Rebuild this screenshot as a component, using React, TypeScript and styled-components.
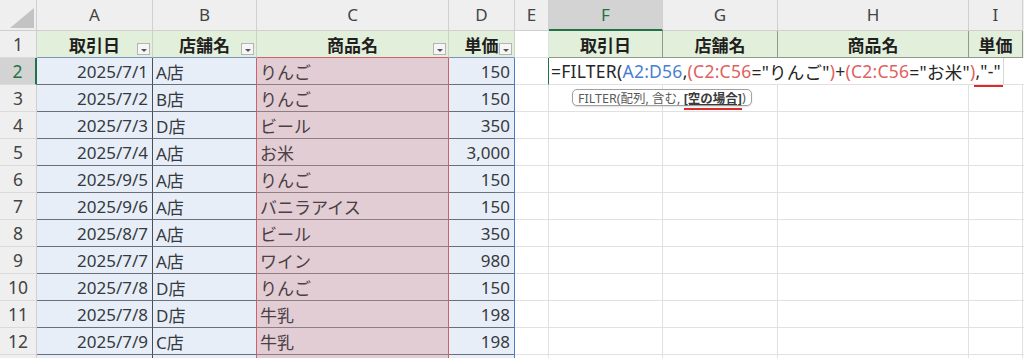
import React from "react";
import styled, { createGlobalStyle, css } from "styled-components";

const Global = createGlobalStyle`
  html, body { margin: 0; padding: 0; background: #ffffff; }
  body { font-family: "Noto Sans", "Noto Sans CJK JP", sans-serif; overflow: hidden; }
`;

const COLS = [37, 116, 104, 192, 66, 34, 114, 115, 191, 54];

const Sheet = styled.div`
  display: grid;
  grid-template-columns: ${COLS.map((c) => c + "px").join(" ")} 1fr;
  grid-template-rows: 31px repeat(13, 27px);
  width: 1024px;
  height: 358px;
  overflow: hidden;
  color: #333333;
  font-size: 17px;
`;

const Corner = styled.div`
  background: #efefef;
  border-right: 1px solid #cfcfcf;
  border-bottom: 1px solid #cfcfcf;
  display: flex;
  align-items: flex-end;
  justify-content: flex-end;
  padding: 0 2px 2px 0;
  box-sizing: border-box;
`;

const ColHeader = styled.div<{ $selected?: boolean }>`
  box-sizing: border-box;
  background: ${(p) => (p.$selected ? "#d3d3d3" : "#efefef")};
  color: ${(p) => (p.$selected ? "#217346" : "#444444")};
  border-right: 1px solid #d0d0d0;
  border-bottom: ${(p) => (p.$selected ? "2px solid #217346" : "1px solid #cfcfcf")};
  display: flex;
  align-items: center;
  justify-content: center;
  font-size: 17px;
  padding-bottom: ${(p) => (p.$selected ? "0" : "1px")};
`;

const RowHeader = styled.div<{ $selected?: boolean }>`
  box-sizing: border-box;
  background: ${(p) => (p.$selected ? "#d3d3d3" : "#efefef")};
  color: ${(p) => (p.$selected ? "#217346" : "#444444")};
  border-right: ${(p) => (p.$selected ? "2px solid #217346" : "1px solid #cfcfcf")};
  border-bottom: 1px solid #dadada;
  display: flex;
  align-items: center;
  justify-content: center;
  font-size: 17.5px;
`;

type HeadTone = "table" | "plain" | "result";

const HeadCell = styled.div<{ $tone: HeadTone; $bottom?: string }>`
  position: relative;
  box-sizing: border-box;
  display: flex;
  align-items: center;
  justify-content: center;
  font-weight: 700;
  font-size: 17px;
  color: #1f1f1f;
  ${(p) =>
    p.$tone === "table" &&
    css`
      background: #e2efda;
      border-right: 1px solid #c9d3c4;
      border-bottom: 1px solid ${p.$bottom || "#7d93c0"};
    `}
  ${(p) =>
    p.$tone === "plain" &&
    css`
      background: #ffffff;
      border-right: 1px solid #e1e1e1;
      border-bottom: 1px solid #e1e1e1;
    `}
  ${(p) =>
    p.$tone === "result" &&
    css`
      background: #e2efda;
      border-right: 1px solid #8f9a8b;
      border-bottom: 1px solid #8f9a8b;
    `}
`;

const FilterButton = styled.span`
  position: absolute;
  right: 2px;
  bottom: 2px;
  width: 13px;
  height: 12px;
  box-sizing: border-box;
  border: 1px solid #b4b4b4;
  background: #f6f6f6;
  display: flex;
  align-items: center;
  justify-content: center;
  &::after {
    content: "";
    margin-top: 2px;
    border-left: 3px solid transparent;
    border-right: 3px solid transparent;
    border-top: 3px solid #555555;
  }
`;

type Kind = "blue" | "red" | "plain";

const DataCell = styled.div<{
  $kind: Kind;
  $align?: "left" | "right";
  $right?: string;
  $bottom?: string;
}>`
  box-sizing: border-box;
  display: flex;
  align-items: center;
  justify-content: ${(p) => (p.$align === "right" ? "flex-end" : "flex-start")};
  padding: ${(p) => (p.$align === "right" ? "0 4px 0 2px" : "0 2px 0 3px")};
  white-space: nowrap;
  overflow: hidden;
  background: ${(p) =>
    p.$kind === "blue" ? "#e8eef8" : p.$kind === "red" ? "#e3cdd4" : "#ffffff"};
  border-right: 1px solid ${(p) => p.$right || "#e1e1e1"};
  border-bottom: 1px solid
    ${(p) =>
      p.$bottom ||
      (p.$kind === "blue" ? "#6a7079" : p.$kind === "red" ? "#8e7d83" : "#e1e1e1")};
  color: ${(p) => (p.$kind === "red" ? "#4a4044" : "#353a40")};
`;

const EditorCell = styled.div`
  grid-column: span 4;
  position: relative;
  box-sizing: border-box;
  border-bottom: 1px solid #e1e1e1;
  display: flex;
  align-items: center;
  overflow: visible;
  z-index: 2;
`;

const FormulaText = styled.span`
  display: inline-flex;
  align-items: center;
  height: 100%;
  white-space: nowrap;
  padding: 0 2px 0 2px;
  border-right: 1px solid #d6d6d6;
  color: #262626;
  font-size: 17.5px;
  letter-spacing: 0.25px;
`;

const Ref = styled.span<{ $c: "blue" | "red" }>`
  color: ${(p) => (p.$c === "blue" ? "#4a7fd0" : "#e0615e")};
`;

const Marked = styled.span`
  position: relative;
  &::after {
    content: "";
    position: absolute;
    left: -1px;
    right: -2px;
    bottom: -4px;
    height: 2px;
    background: #e02a2a;
  }
`;

const Tip = styled.div`
  position: absolute;
  left: 23px;
  top: 31px;
  height: 17px;
  box-sizing: border-box;
  padding: 0 5px;
  border: 1px solid #a0a0a0;
  border-radius: 5px;
  background: #ffffff;
  font-size: 12.5px;
  color: #5a5a5a;
  display: flex;
  align-items: center;
  white-space: nowrap;
  box-shadow: 0 1px 2px rgba(0, 0, 0, 0.12);
`;

const TipBold = styled.span`
  position: relative;
  font-weight: 700;
  color: #3a3a3a;
  text-decoration: underline;
  text-underline-offset: 1px;
  &::after {
    content: "";
    position: absolute;
    left: 0;
    right: 0;
    bottom: -3px;
    height: 2px;
    background: #e02a2a;
  }
`;

const Filler = styled.div`
  background: #efefef;
`;

const letters = ["A", "B", "C", "D", "E", "F", "G", "H", "I"];

const rows: string[][] = [
  ["2025/7/1", "A店", "りんご", "150"],
  ["2025/7/2", "B店", "りんご", "150"],
  ["2025/7/3", "D店", "ビール", "350"],
  ["2025/7/4", "A店", "お米", "3,000"],
  ["2025/9/5", "A店", "りんご", "150"],
  ["2025/9/6", "A店", "バニラアイス", "150"],
  ["2025/8/7", "A店", "ビール", "350"],
  ["2025/7/7", "A店", "ワイン", "980"],
  ["2025/7/8", "D店", "りんご", "150"],
  ["2025/7/8", "D店", "牛乳", "198"],
  ["2025/7/9", "C店", "牛乳", "198"],
  ["", "", "", ""],
];

const headers = ["取引日", "店舗名", "商品名", "単価"];

export default function App() {
  return (
    <>
      <Global />
      <Sheet>
        <Corner>
          <svg width="24" height="20" viewBox="0 0 24 20">
            <polygon points="24,0 24,20 0,20" fill="#c3c3c3" />
          </svg>
        </Corner>
        {letters.map((l) => (
          <ColHeader key={l} $selected={l === "F"}>
            {l}
          </ColHeader>
        ))}
        <Filler />

        <RowHeader>1</RowHeader>
        {headers.map((h, i) => (
          <HeadCell key={"h" + i} $tone="table" $bottom={i === 2 ? "#d0606a" : "#7d93c0"}>
            {h}
            <FilterButton />
          </HeadCell>
        ))}
        <HeadCell $tone="plain" />
        {headers.map((h, i) => (
          <HeadCell key={"r" + i} $tone="result">
            {h}
          </HeadCell>
        ))}
        <Filler />

        {rows.map((r, idx) => {
          const n = idx + 2;
          return (
            <React.Fragment key={n}>
              <RowHeader $selected={n === 2}>{n < 13 ? n : ""}</RowHeader>
              <DataCell $kind="blue" $align="right" $right="#48505a">
                {r[0]}
              </DataCell>
              <DataCell $kind="blue" $right="#d0606a">
                {r[1]}
              </DataCell>
              <DataCell $kind="red" $right="#d0606a">
                {r[2]}
              </DataCell>
              <DataCell $kind="blue" $align="right" $right="#4a7fd0">
                {r[3]}
              </DataCell>
              <DataCell $kind="plain" $right={n === 2 ? "#217346" : "#e1e1e1"} />
              {n === 2 ? (
                <EditorCell>
                  <FormulaText>
                    =FILTER(<Ref $c="blue">A2:D56</Ref>,<Ref $c="red">(C2:C56</Ref>="りんご"
                    <Ref $c="red">)</Ref>+<Ref $c="red">(C2:C56</Ref>="お米"
                    <Ref $c="red">)</Ref>
                    <Marked>,"-"</Marked>
                  </FormulaText>
                  <Tip>
                    FILTER(配列, 含む,&nbsp;<TipBold>[空の場合]</TipBold>)
                  </Tip>
                </EditorCell>
              ) : (
                <>
                  <DataCell $kind="plain" />
                  <DataCell $kind="plain" />
                  <DataCell $kind="plain" />
                  <DataCell $kind="plain" />
                </>
              )}
              <DataCell $kind="plain" />
            </React.Fragment>
          );
        })}
      </Sheet>
    </>
  );
}
